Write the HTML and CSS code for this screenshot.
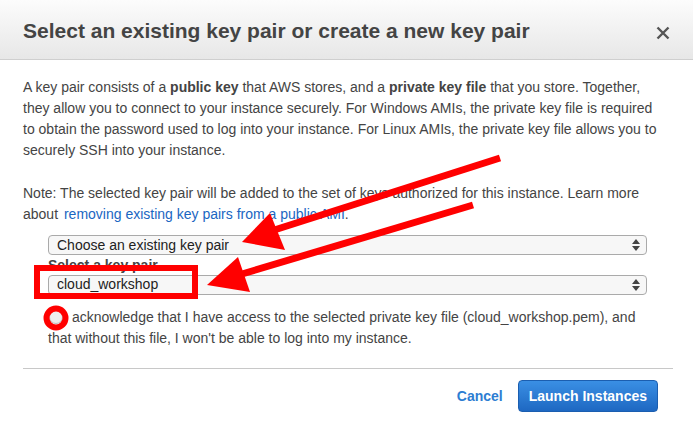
FILE: index.html
```html
<!DOCTYPE html>
<html>
<head>
<meta charset="utf-8">
<link rel="stylesheet" href="styles.css">
</head>
<body>
<div class="modal">
  <div class="header">
    <h1 class="title">Select an existing key pair or create a new key pair</h1>
    <svg class="close" width="14" height="14" viewBox="0 0 14 14"><path d="M1.5 1.5 L12.5 12.5 M12.5 1.5 L1.5 12.5" stroke="#555" stroke-width="2.4" fill="none"/></svg>
  </div>
  <div class="body">
    <p class="text">A key pair consists of a <b>public key</b> that AWS stores, and a <b>private key file</b> that you store. Together,<br>they allow you to connect to your instance securely. For Windows AMIs, the private key file is required<br>to obtain the password used to log into your instance. For Linux AMIs, the private key file allows you to<br>securely SSH into your instance.</p>
    <p class="text note">Note: The selected key pair will be added to the set of keys authorized for this instance. Learn more<br>about <a class="link" href="#">removing existing key pairs from a public AMI</a>.</p>
    <div class="form">
      <div class="select"><span>Choose an existing key pair</span><svg class="updown" width="8" height="12" viewBox="0 0 8 12"><path d="M4 0 L8 5 L0 5 Z M0 7 L8 7 L4 12 Z" fill="#444"/></svg></div>
      <div class="label">Select a key pair</div>
      <div class="select"><span class="val">cloud_workshop</span><svg class="updown" width="8" height="12" viewBox="0 0 8 12"><path d="M4 0 L8 5 L0 5 Z M0 7 L8 7 L4 12 Z" fill="#444"/></svg></div>
      <p class="ack"><span class="check"></span>acknowledge that I have access to the selected private key file (cloud_workshop.pem), and<br>that without this file, I won't be able to log into my instance.</p>
    </div>
    <div class="footer">
      <a class="cancel" href="#">Cancel</a>
      <button class="launch">Launch Instances</button>
    </div>
  </div>
</div>
<svg class="annot" width="693" height="429" viewBox="0 0 693 429">
  <g fill="#ff0000" stroke="#ff0000">
    <line x1="500" y1="158" x2="268" y2="232" stroke-width="7"/>
    <polygon points="242,242 270,213 285,250" stroke="none"/>
    <line x1="473" y1="205" x2="242" y2="274" stroke-width="7"/>
    <polygon points="207,285 238,257 250,292" stroke="none"/>
    <rect x="37" y="268" width="158" height="28" fill="none" stroke-width="6"/>
    <circle cx="56" cy="318" r="9.5" fill="none" stroke-width="6"/>
  </g>
</svg>
</body>
</html>
```

FILE: styles.css
```css
html, body {
  margin: 0;
  padding: 0;
  background: #fff;
}
body {
  width: 693px;
  height: 429px;
  overflow: hidden;
  position: relative;
  font-family: "Liberation Sans", Arial, sans-serif;
  color: #444;
}
.modal {
  width: 693px;
}
.header {
  height: 57px;
  padding: 2px 23px 0 23px;
  display: flex;
  align-items: center;
  justify-content: space-between;
  background: linear-gradient(#fcfcfc, #e7e7e7);
  border-bottom: 1px solid #cfcfcf;
}
.title {
  margin: 0;
  font-size: 21px;
  font-weight: bold;
  color: #444;
}
.close {
  margin-right: 0;
  margin-top: 5px;
}
.body {
  padding: 17px 20px 0 23px;
}
.text {
  margin: 0;
  font-size: 14px;
  line-height: 21px;
  white-space: nowrap;
}
.note {
  margin-top: 22px;
}
.link {
  color: #1a66c2;
  text-decoration: none;
  margin-left: 2px;
}
.form {
  margin: 10px 26px 0 25px;
}
.select {
  height: 18px;
  border: 1px solid #aaa;
  border-radius: 4px;
  background: #f7f7f7;
  display: flex;
  align-items: center;
  justify-content: space-between;
  padding: 0 6px 0 8px;
  font-size: 14px;
  color: #222;
}
.val {
  margin-top: -2px;
}
.updown {
  display: block;
}
.label {
  font-size: 14px;
  font-weight: bold;
  line-height: 20px;
  color: #444;
}
.ack {
  margin: 12px 0 0 0;
  font-size: 14px;
  line-height: 21px;
  white-space: nowrap;
}
.check {
  display: inline-block;
  width: 12px;
  height: 12px;
  border-radius: 50%;
  border: 1px solid #bbb;
  background: #eee;
  margin: 0 9px 0 1px;
  vertical-align: -2px;
}
.footer {
  margin-top: 19px;
  border-top: 1px solid #c8c8c8;
  padding: 11px 15px 0 0;
  display: flex;
  justify-content: flex-end;
  align-items: center;
  gap: 15px;
}
.cancel {
  color: #2d7dd2;
  font-weight: bold;
  font-size: 14px;
  text-decoration: none;
}
.launch {
  height: 32px;
  padding: 0 10px;
  border: 1px solid #1b5eb0;
  border-radius: 4px;
  background: linear-gradient(#3a8fe4, #1e68c2);
  color: #fff;
  font-family: "Liberation Sans", Arial, sans-serif;
  font-weight: bold;
  font-size: 14px;
}
.annot {
  position: absolute;
  top: 0;
  left: 0;
  pointer-events: none;
}
```
